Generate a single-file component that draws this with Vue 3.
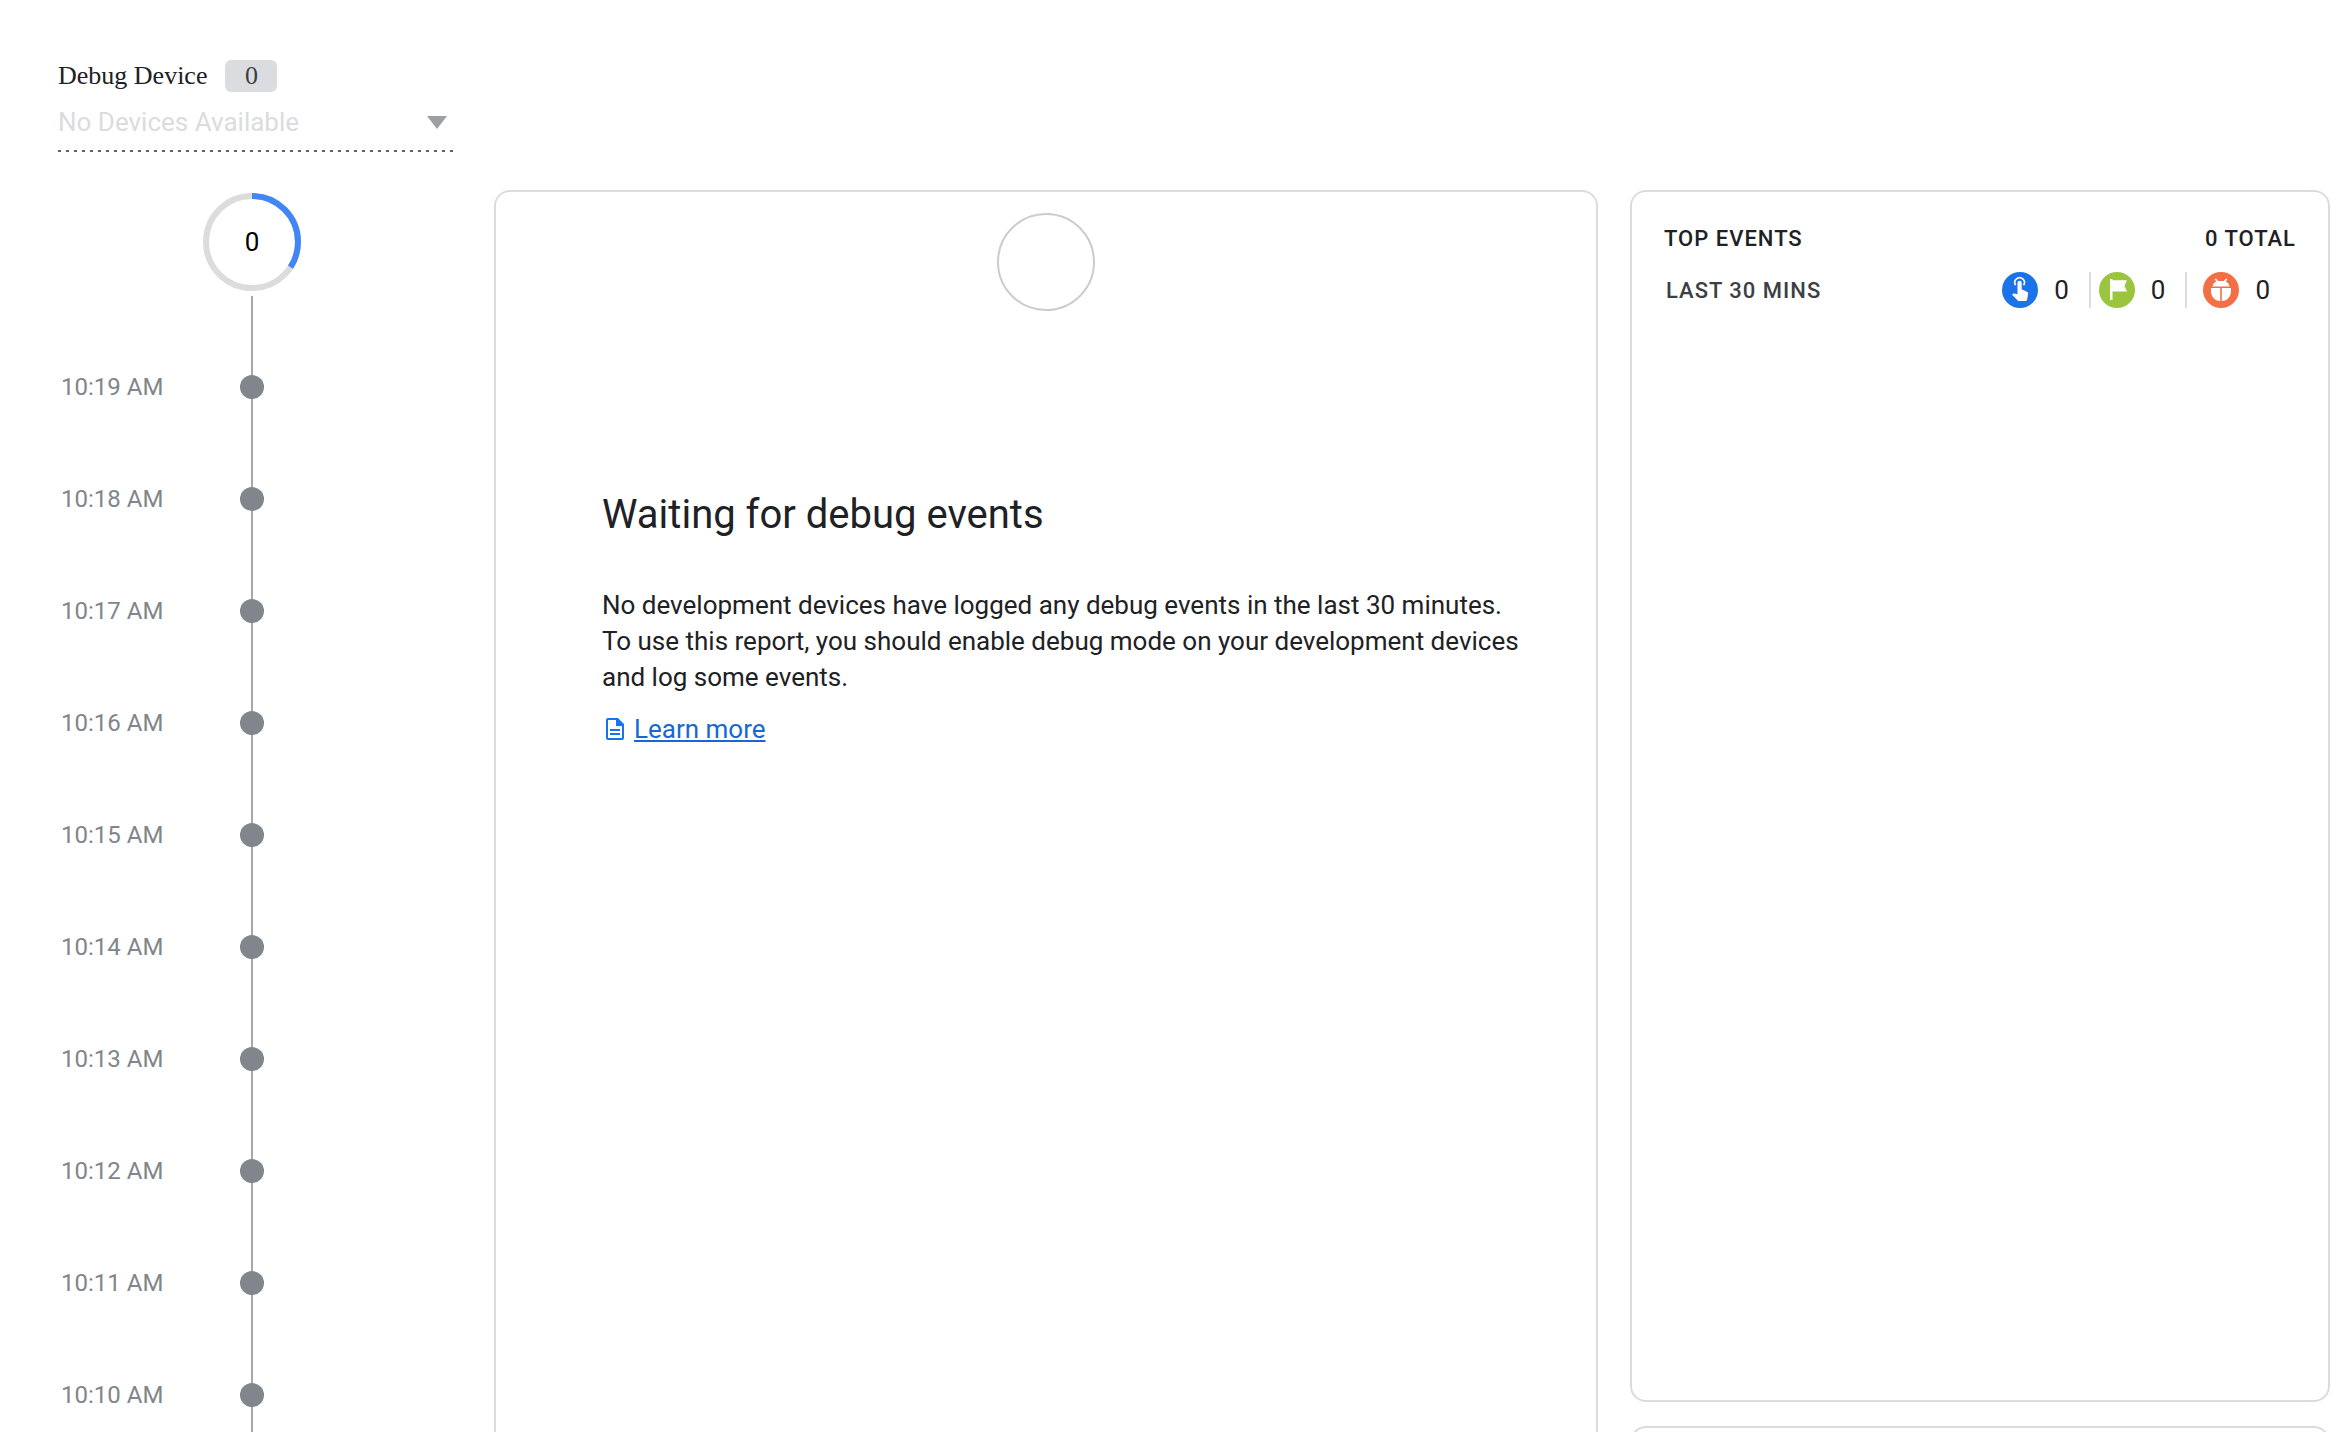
<script setup>
const times = [
  '10:19 AM',
  '10:18 AM',
  '10:17 AM',
  '10:16 AM',
  '10:15 AM',
  '10:14 AM',
  '10:13 AM',
  '10:12 AM',
  '10:11 AM',
  '10:10 AM',
]

const ringLength = 2 * Math.PI * 46
const progress = 123 / 360
</script>

<template>
  <main class="debug-view">
    <header class="device">
      <div class="device-title">
        <label for="device">Debug Device</label>
        <span class="badge">0</span>
      </div>
      <div class="device-field">
        <select id="device" disabled>
          <option>No Devices Available</option>
        </select>
        <svg class="caret" width="20" height="13" viewBox="0 0 20 13" aria-hidden="true">
          <path d="M0 0h20L10 13z" fill="#9e9fa1" />
        </svg>
      </div>
    </header>

    <div class="columns">
      <section class="timeline" aria-label="Minutes stream">
        <div class="ring">
          <svg width="98" height="98" viewBox="0 0 98 98" aria-hidden="true">
            <circle cx="49" cy="49" r="46" fill="none" stroke="#dcdcdc" stroke-width="6" />
            <circle
              cx="49" cy="49" r="46" fill="none" stroke="#4285f4" stroke-width="6"
              :stroke-dasharray="`${ringLength * progress} ${ringLength}`"
              transform="rotate(-90 49 49)"
            />
          </svg>
          <span>0</span>
        </div>
        <ol class="minutes">
          <li v-for="time in times" :key="time">
            <time>{{ time }}</time>
            <span class="dot"></span>
          </li>
        </ol>
      </section>

      <section class="panel stream">
        <div class="stream-start"></div>
        <div class="message">
          <h1>Waiting for debug events</h1>
          <p>
            No development devices have logged any debug events in the last 30 minutes.<br />
            To use this report, you should enable debug mode on your development devices<br />
            and log some events.
          </p>
          <a href="#" class="learn">
            <svg width="18" height="22" viewBox="0 0 18 22" aria-hidden="true">
              <path
                fill="#1a73e8" fill-rule="evenodd"
                d="M2 0h10l6 6v14a2 2 0 0 1-2 2H2a2 2 0 0 1-2-2V2a2 2 0 0 1 2-2zm0 2v18h14V8h-6V2zM4 11h10v2H4zM4 15h10v2H4z"
              />
            </svg>
            <span>Learn more</span>
          </a>
        </div>
      </section>

      <div class="side">
        <section class="panel events">
          <div class="events-row">
            <h2>TOP EVENTS</h2>
            <span class="total">0 TOTAL</span>
          </div>
          <div class="events-row">
            <span class="period">LAST 30 MINS</span>
            <ul class="counts">
              <li>
                <svg width="36" height="36" viewBox="0 0 36 36" aria-hidden="true">
                  <circle cx="18" cy="18" r="18" fill="#1a73e8" />
                  <path d="M13.6 13.2a4.8 4.8 0 1 1 8 0" fill="none" stroke="#fff" stroke-width="1.6" />
                  <path
                    fill="#fff"
                    d="M15.5 10.8a2.1 2.1 0 0 1 4.2 0v7h1l4.6 2.3c.6.3.9.9.8 1.6l-.9 5.6c-.1.9-.8 1.700-1.800 1.700h-6.300c-.5 0-1-.2-1.400-.6l-5.600-5.600 1-1c.3-.3.7-.4 1.100-.3l3.300.8z"
                  />
                </svg>
                <span>0</span>
              </li>
              <li>
                <svg width="36" height="36" viewBox="0 0 36 36" aria-hidden="true">
                  <circle cx="18" cy="18" r="18" fill="#9bc53f" />
                  <path fill="#fff" d="M11 7h2.500v1.200H28L25.500 14l2.500 5.500H13.500V28H11z" />
                </svg>
                <span>0</span>
              </li>
              <li>
                <svg width="36" height="36" viewBox="0 0 36 36" aria-hidden="true">
                  <circle cx="18" cy="18" r="18" fill="#f36f45" />
                  <path
                    fill="#fff"
                    d="M9.500 14.400c.2-2.200 1.600-4 3.700-5l-1.500-2 1.300-1 2.100 2.600h5.800L23 6.400l1.300 1-1.500 2c2.100 1 3.500 2.800 3.700 5zM8 16h9.200v13.200C11.500 28.800 8 24.500 8 19zM18.800 16H28v3c0 5.500-3.500 9.800-9.200 10.200z"
                  />
                </svg>
                <span>0</span>
              </li>
            </ul>
          </div>
        </section>
        <section class="panel next"></section>
      </div>
    </div>
  </main>
</template>

<style>
body {
  margin: 0;
  background: #fff;
}
</style>

<style scoped>
* {
  box-sizing: border-box;
}

.debug-view {
  display: flex;
  flex-direction: column;
  height: 100vh;
  overflow: hidden;
  padding-right: 20px;
  color: #202124;
  font-family: Roboto, sans-serif;
  font-size: 26px;
}

.device {
  flex: none;
  width: 396px;
  margin: 60px 0 38px 58px;
}

.device-title {
  display: flex;
  align-items: center;
  gap: 18px;
  height: 32px;
  font-family: "Liberation Serif", serif;
  line-height: 32px;
}

.badge {
  width: 52px;
  border-radius: 6px;
  background: #dadce0;
  color: #3c4043;
  text-align: center;
}

.device-field {
  display: flex;
  align-items: center;
  margin-top: 5px;
  padding: 0 7px 5px 0;
  background: repeating-linear-gradient(90deg, #5f6368 0 3px, transparent 3px 8px) left bottom / 100% 2px no-repeat;
}

select {
  flex: 1;
  height: 50px;
  padding: 0;
  border: 0;
  background: none;
  color: #dadce0;
  font: inherit;
  opacity: 1;
  appearance: none;
}

.caret {
  flex: none;
}

.columns {
  display: flex;
  flex: 1;
  min-height: 0;
}

.timeline {
  display: flex;
  flex: none;
  flex-direction: column;
  width: 494px;
  padding-top: 3px;
}

.ring {
  display: grid;
  place-items: center;
  width: 98px;
  margin-left: 203px;
  color: #000;
}

.ring > * {
  grid-area: 1 / 1;
}

.minutes {
  flex: 1;
  margin: 5px 0 0;
  padding: 35px 0 0 61px;
  background: linear-gradient(#a8a8a8, #a8a8a8) 251px 0 / 2px 100% no-repeat;
  list-style: none;
}

.minutes li {
  display: flex;
  align-items: center;
  height: 112px;
}

.minutes time {
  width: 179px;
  color: #80868b;
  font-size: 24px;
}

.dot {
  width: 24px;
  height: 24px;
  border-radius: 50%;
  background: #80868b;
}

.panel {
  border: 2px solid #dadce0;
  border-radius: 16px;
}

.stream {
  flex: 1100 1 0;
  height: 1400px;
}

.stream-start {
  width: 98px;
  height: 98px;
  margin: 21px auto 0;
  border: 2px solid #ccc;
  border-radius: 50%;
}

.message {
  padding: 180px 0 0 106px;
}

h1 {
  margin: 0 0 48px;
  font-size: 40px;
  font-weight: 400;
  line-height: 48px;
}

p {
  margin: 0 0 16px;
  line-height: 36px;
  white-space: nowrap;
}

.learn {
  display: inline-flex;
  align-items: center;
  gap: 10px;
  padding-left: 4px;
  color: #1967d2;
  line-height: 36px;
  text-decoration: none;
}

.learn span {
  text-decoration: underline;
}

.side {
  display: flex;
  flex: 700 1 0;
  flex-direction: column;
  gap: 24px;
  margin-left: 32px;
}

.events {
  flex: none;
  height: 1212px;
  padding: 28px 32px;
}

.next {
  flex: none;
  height: 200px;
}

.events-row {
  display: flex;
  align-items: center;
  justify-content: space-between;
  height: 36px;
  margin-bottom: 16px;
  font-size: 22px;
  letter-spacing: 1px;
}

h2,
.total {
  margin: 0;
  font-size: 22px;
  font-weight: 500;
}

.period {
  padding-left: 2px;
  color: #3c4043;
  font-weight: 500;
}

.counts {
  display: flex;
  margin: 0;
  padding: 0 26px 0 0;
  font-size: 26px;
  letter-spacing: 0;
  list-style: none;
}

.counts li {
  display: flex;
  align-items: center;
  gap: 16px;
}

.counts li + li {
  margin-left: 20px;
  padding-left: 8px;
  border-left: 2px solid #dadce0;
}

.counts li:last-child {
  padding-left: 16px;
}
</style>
